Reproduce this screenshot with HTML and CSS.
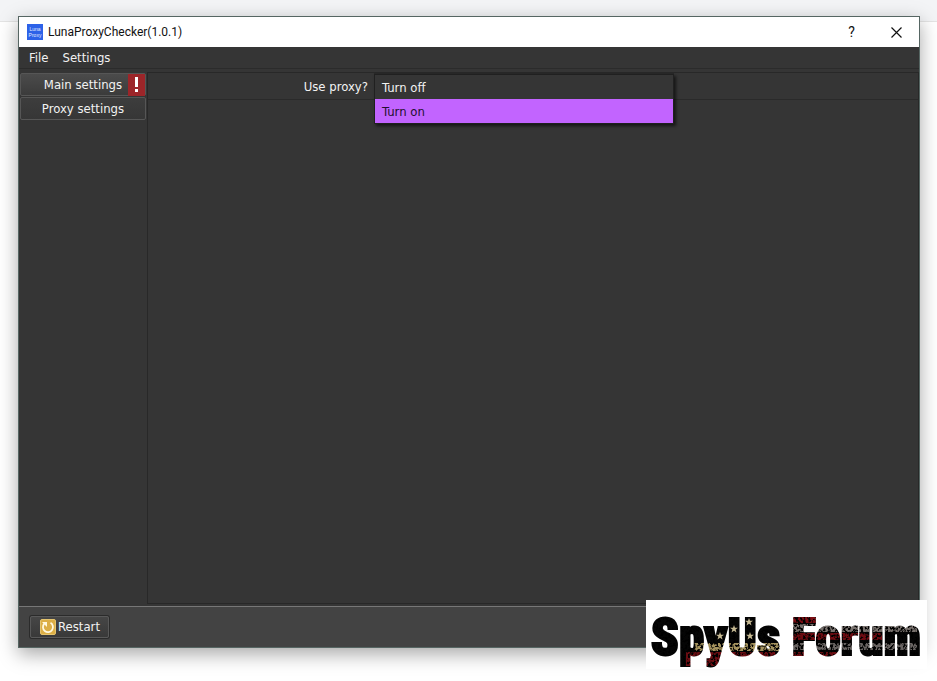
FILE: index.html
```
<!DOCTYPE html>
<html lang="en">
<head>
  <meta charset="UTF-8">
  <meta name="viewport" content="width=device-width, initial-scale=1.0">
  <title>LunaProxyChecker(1.0.1)</title>
  <link rel="stylesheet" href="styles.css">
</head>
<body>

  <div class="window">
    <header class="titlebar">
      <svg class="app-icon" width="16" height="16" viewBox="0 0 16 16" aria-hidden="true">
        <rect width="16" height="16" fill="#2d62e8"/>
        <text x="8" y="7" text-anchor="middle">Luna</text>
        <text x="8" y="13" text-anchor="middle">Proxy</text>
      </svg>
      <span class="title">LunaProxyChecker(1.0.1)</span>
      <button class="help" aria-label="Help">?</button>
      <button class="close" aria-label="Close">
        <svg width="11" height="11" viewBox="0 0 11 11"><path d="M.5 .5l10 10M10.5 .5l-10 10" stroke="#111" stroke-width="1.2"/></svg>
      </button>
    </header>

    <nav class="menubar">
      <button>File</button>
      <button>Settings</button>
    </nav>

    <div class="content">
      <aside class="sidebar">
        <button class="tab active">Main settings
          <svg class="alert" width="17" height="22" viewBox="0 0 17 22" aria-hidden="true">
            <rect width="17" height="22" fill="#9c2529"/>
            <path d="M7 3h3v10H7zM7 15h3v3H7z" fill="#fff"/>
          </svg>
        </button>
        <button class="tab">Proxy settings</button>
      </aside>

      <main class="panel">
        <div class="field">
          <label for="use-proxy">Use proxy?</label>
          <div class="combo">
            <select id="use-proxy">
              <option>Turn off</option>
              <option selected>Turn on</option>
            </select>
            <!-- open list -->
            <ul class="options" role="listbox" aria-label="Use proxy?">
              <li role="option" aria-selected="false">Turn off</li>
              <li role="option" aria-selected="true">Turn on</li>
            </ul>
          </div>
        </div>
      </main>
    </div>

    <footer class="footer">
      <button class="restart">
        <svg width="16" height="16" viewBox="0 0 16 16" aria-hidden="true">
          <rect x=".5" y=".5" width="15" height="15" rx="1.5" fill="#dcae45" stroke="#e5c46e"/>
          <path d="M10.5 3.8A5 5 0 1 1 4.3 4.7" fill="none" stroke="#fff8df" stroke-width="1.8"/>
          <path d="M2 3h5v5z" fill="#fff8df"/>
        </svg>
        Restart
      </button>
    </footer>
  </div>

  <svg class="watermark" width="281" height="69" viewBox="0 0 281 69">
    <defs>
      <path id="star" d="M0-4L1-1.2 4-1.2 1.6.6 2.5 3.6 0 1.8-2.5 3.6-1.6.6-4-1.2-1-1.2z"/>
      <filter id="grain" x="0" y="0" width="1" height="1">
        <feTurbulence type="fractalNoise" baseFrequency=".4" numOctaves="2" seed="4"/>
        <feColorMatrix values="0 0 0 0 0  0 0 0 0 0  0 0 0 0 0  6 0 0 0 -2.7"/>
      </filter>
      <!-- worn flag inside the letters -->
      <pattern id="flag" width="281" height="69" patternUnits="userSpaceOnUse">
        <rect width="281" height="69" fill="#050505"/>
        <rect x="48" y="43" width="88" height="8" fill="#a4925d"/>
        <rect x="40" y="52" width="100" height="14" fill="#6a0d12"/>
        <rect x="146" y="16" width="26" height="7" fill="#7a0c12"/>
        <rect x="146" y="24" width="125" height="8" fill="#77706c"/>
        <rect x="146" y="33" width="90" height="7" fill="#6d0b11"/>
        <rect x="146" y="43" width="125" height="7" fill="#686361"/>
        <rect x="146" y="52" width="50" height="4" fill="#6a0d12"/>
        <rect width="281" height="69" filter="url(#grain)"/>
        <g fill="#c6b992">
          <use href="#star" x="88" y="29"/>
          <use href="#star" x="103" y="22"/>
          <use href="#star" x="74" y="36"/>
          <use href="#star" x="104" y="36"/>
        </g>
      </pattern>
    </defs>
    <text x="140" y="55" text-anchor="middle">SpyUs Forum</text>
  </svg>

</body>
</html>
```
FILE: styles.css
```
* {
  box-sizing: border-box;
}
body {
  margin: 0;
  min-height: 100vh;
  display: flex;
  padding: 16px 17px 33px 18px;
  position: relative;
  background: linear-gradient(#f3f4f6 21px, #e4e4e4 21px, #e4e4e4 22px, #fff 22px);
  font-family: "DejaVu Sans Condensed", "Noto Sans", sans-serif;
  font-size: 13px;
  line-height: 16px;
  color: #f2f2f2;
}
button {
  font: inherit;
  color: inherit;
  background: none;
  border: none;
  margin: 0;
  padding: 0;
}
.window {
  flex: 1;
  display: flex;
  flex-direction: column;
  background: #353535;
  border: 1px solid #566663;
  box-shadow: 0 6px 18px rgba(0,0,0,0.35);
}

/* title bar */
.titlebar {
  display: flex;
  align-items: center;
  height: 30px;
  padding-left: 8px;
  background: #fff;
  color: #111;
  font-family: Roboto, "Noto Sans", sans-serif;
  font-size: 12px;
}
.app-icon text {
  font-family: "Liberation Sans", sans-serif;
  font-size: 5px;
  fill: #e2eaff;
}
.title {
  flex: 1;
  margin-left: 5px;
}
.help, .close {
  display: flex;
  align-items: center;
  justify-content: center;
  width: 45px;
  height: 30px;
}
.help {
  font-size: 14px;
}

/* menu */
.menubar {
  display: flex;
  align-items: center;
  gap: 14px;
  height: 22px;
  padding: 1px 10px 0;
  border-bottom: 1px solid #2b2b2b;
}

/* tabs and form */
.content {
  flex: 1;
  display: flex;
  padding-top: 3px;
}
.sidebar {
  width: 128px;
  padding: 1px 1px 0;
  display: flex;
  flex-direction: column;
  gap: 1px;
}
.tab {
  position: relative;
  height: 23px;
  border: 1px solid #565656;
  border-radius: 2px;
  background: linear-gradient(#3d3d3d, #363636);
}
.tab.active {
  background: linear-gradient(#4b4b4b, #3b3b3b);
}
.alert {
  position: absolute;
  top: 0;
  right: 0;
}
.panel {
  flex: 1;
  margin-bottom: 2px;
  border: 1px solid #282828;
}
.field {
  display: grid;
  grid-template-columns: 226fr 300fr 244fr;
  align-items: center;
  height: 27px;
  border-bottom: 1px solid #2a2a2a;
}
.field label {
  padding: 2px 6px 0 0;
  text-align: right;
}
.combo {
  position: relative;
  height: 26px;
}
.combo select {
  width: 100%;
  height: 26px;
  padding: 0 7px;
  border: 1px solid #292929;
  background: #353535;
  color: inherit;
  font: inherit;
  appearance: none;
}
.options {
  position: absolute;
  top: 1px;
  left: 0;
  width: 100%;
  margin: 0;
  padding: 0;
  list-style: none;
  background: #353535;
  border: 1px solid #202020;
  box-shadow: 2px 2px 3px rgba(0,0,0,0.6);
}
.options li {
  height: 24px;
  padding: 5px 7px 3px;
}
.options li[aria-selected="true"] {
  background: #c264ff;
  color: #24102f;
}

/* bottom bar */
.footer {
  height: 41px;
  padding: 9px 11px;
  border-top: 1px solid #777;
  background: #434343;
}
.restart {
  display: flex;
  align-items: center;
  gap: 2px;
  height: 22px;
  padding: 0 8px 0 9px;
  border: 1px solid #595959;
  border-radius: 2px;
  background: linear-gradient(#464646, #393939);
  box-shadow: 0 0 0 1px #2b2b2b;
}

.watermark {
  position: absolute;
  right: 10px;
  bottom: 12px;
  background: #fff;
}
.watermark text {
  font: 900 51px "Roboto Condensed", Roboto, sans-serif;
  fill: url(#flag);
  stroke: url(#flag);
  stroke-width: 2px;
}
```
